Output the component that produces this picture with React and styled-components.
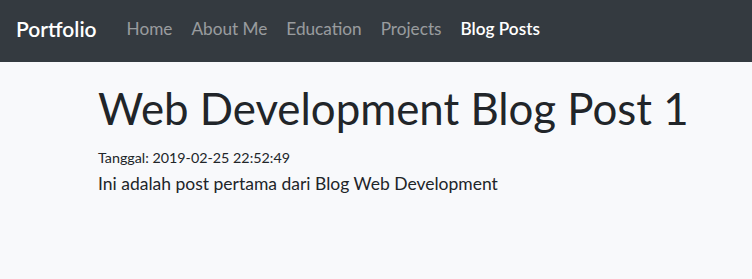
import React from 'react'
import styled, { createGlobalStyle } from 'styled-components'

const GlobalStyle = createGlobalStyle`
body {
  margin: 0;
  background: #f8f9fb;
  font-family: Lato, "Noto Sans", sans-serif;
  color: #212529;
}
`

const Nav = styled.nav`
height: 62px;
background: #343a40;
display: flex;
align-items: center;
padding: 0 16px 5px;
box-sizing: border-box;
`

const Brand = styled.a`
font-size: 21px;
font-weight: 600;
color: #fff;
margin-right: 30px;
text-decoration: none;
`

const Links = styled.ul`
list-style: none;
display: flex;
gap: 19px;
margin: 0;
padding: 0;
`

const Link = styled.li`
font-size: 17.2px;
color: ${props => props.active ? '#fff' : 'rgba(255,255,255,0.5)'};
font-weight: ${props => props.active ? 600 : 400};
`

const Main = styled.main`
padding: 20px 0 0 98px;
`

const Title = styled.h1`
font-size: 43.8px;
font-weight: 400;
line-height: 1.2;
margin: 0 0 14px;
`

const Date = styled.div`
font-size: 14.3px;
margin-bottom: 7px;
`

const Body = styled.p`
font-size: 17.5px;
margin: 0;
`

const links = ['Home', 'About Me', 'Education', 'Projects', 'Blog Posts']

const App = () => {
  return (
    <>
      <GlobalStyle />
      <Nav>
        <Brand>Portfolio</Brand>
        <Links>
          {links.map(l => (
            <Link key={l} active={l === 'Blog Posts'}>{l}</Link>
          ))}
        </Links>
      </Nav>
      <Main>
        <Title>Web Development Blog Post 1</Title>
        <Date>Tanggal: 2019-02-25 22:52:49</Date>
        <Body>Ini adalah post pertama dari Blog Web Development</Body>
      </Main>
    </>
  )
}

export default App
